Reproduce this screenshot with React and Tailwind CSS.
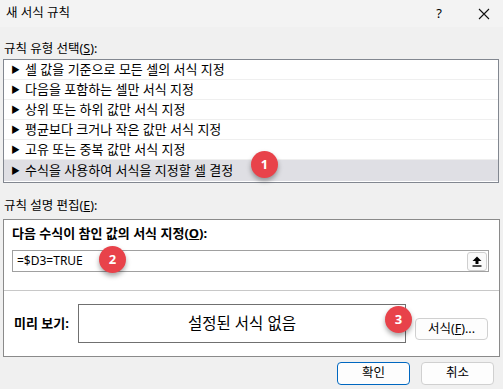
import React from 'react';

const font = { fontFamily: '"Noto Sans", "Noto Sans CJK KR", sans-serif' };

const rules = [
  '셀 값을 기준으로 모든 셀의 서식 지정',
  '다음을 포함하는 셀만 서식 지정',
  '상위 또는 하위 값만 서식 지정',
  '평균보다 크거나 작은 값만 서식 지정',
  '고유 또는 중복 값만 서식 지정',
  '수식을 사용하여 서식을 지정할 셀 결정',
];

const Badge = ({ n, className }) => (
  <div
    className={`absolute w-[27px] h-[27px] rounded-full bg-[#e8424a] text-white text-[13px] font-bold flex items-center justify-center shadow-[0_3px_5px_rgba(0,0,0,0.35)] ${className}`}
  >
    {n}
  </div>
);

export default function App() {
  return (
    <div className="relative w-[503px] h-[389px] overflow-hidden bg-[#f0f0f0] text-[#000] text-[12.5px]" style={font}>
      {/* title bar */}
      <div className="h-[27px] bg-[#f3f3f3] flex items-center pl-[6px] pr-[12px]">
        <span className="text-[12.5px] leading-none">새 서식 규칙</span>
        <span className="ml-auto mr-[36px] text-[13px] leading-none">?</span>
        <svg width="12" height="12" viewBox="0 0 12 12" className="mr-[1px]">
          <path d="M1 1 L11 11 M11 1 L1 11" stroke="#111" strokeWidth="1.1" />
        </svg>
      </div>

      <div className="px-[3px]">
        <div className="h-[32px] flex items-end pb-[4px] pl-[1px] leading-none">
          규칙 유형 선택(<span className="underline">S</span>):
        </div>

        {/* rule type list */}
        <div className="w-[496px] h-[124px] border border-[#828790] bg-white">
          {rules.map((r, i) => (
            <div
              key={i}
              className={`h-[20px] flex items-center pl-[7px] text-[13px] ${
                i === rules.length - 1 ? 'bg-[#dfdfe4] h-[21px]' : 'border-b border-[#efefef]'
              }`}
            >
              <span className="text-[9px] mr-[5px] leading-none">▶</span>
              <span className="leading-none">{r}</span>
            </div>
          ))}
        </div>

        <div className="h-[36px] flex items-end pb-[7px] pl-[1px] leading-none">
          규칙 설명 편집(<span className="underline">E</span>):
        </div>

        {/* description panel */}
        <div className="w-[497px] h-[138px] border border-[#8a8a8a] bg-white flex flex-col">
          <div className="h-[71px] border-b border-[#c8c8c8] pl-[8px] pr-[10px] pt-[7px]">
            <div className="font-bold text-[13px] leading-none h-[14px]">
              다음 수식이 참인 값의 서식 지정(<span className="underline">O</span>):
            </div>
            <div className="mt-[9px] h-[22px] border border-[#a0a0a0] flex items-center pl-[4px] pr-[1px]">
              <span className="text-[12px] leading-none">=$D3=TRUE</span>
              <div className="ml-auto w-[20px] h-[19px] rounded-[3px] border border-[#cfcfcf] bg-[#fafafa] flex items-center justify-center">
                <svg width="10" height="11" viewBox="0 0 10 11">
                  <path d="M5 0.5 L9.5 5 L6.5 5 L6.5 8 L3.5 8 L3.5 5 L0.5 5 Z" fill="#000" />
                  <rect x="0.5" y="9.3" width="9" height="1.4" fill="#000" />
                </svg>
              </div>
            </div>
          </div>
          <div className="flex-1 flex items-center pl-[10px] pr-[11px]">
            <div className="font-bold text-[13px] leading-none w-[64px]">미리 보기:</div>
            <div className="w-[328px] h-[39px] border border-[#707070] flex items-center justify-center text-[15.5px] leading-none">
              설정된 서식 없음
            </div>
            <button className="ml-auto mb-[-1px] self-start mt-[27px] w-[73px] h-[22px] rounded-[4px] border border-[#d0d0d0] bg-[#fdfdfd] text-[12.5px] leading-none">
              서식(<span className="underline">F</span>)...
            </button>
          </div>
        </div>

        {/* footer buttons */}
        <div className="flex justify-end gap-[11px] pr-[6px] pt-[5px]">
          <button className="w-[73px] h-[23px] rounded-[4px] border border-[#0067c0] bg-[#fdfdfd] text-[12.5px] leading-none">
            확인
          </button>
          <button className="w-[73px] h-[23px] rounded-[4px] border border-[#d0d0d0] bg-[#fdfdfd] text-[12.5px] leading-none">
            취소
          </button>
        </div>
      </div>

      <Badge n="1" className="left-[251px] top-[151px]" />
      <Badge n="2" className="left-[99px] top-[246px]" />
      <Badge n="3" className="left-[385px] top-[306px]" />
    </div>
  );
}
